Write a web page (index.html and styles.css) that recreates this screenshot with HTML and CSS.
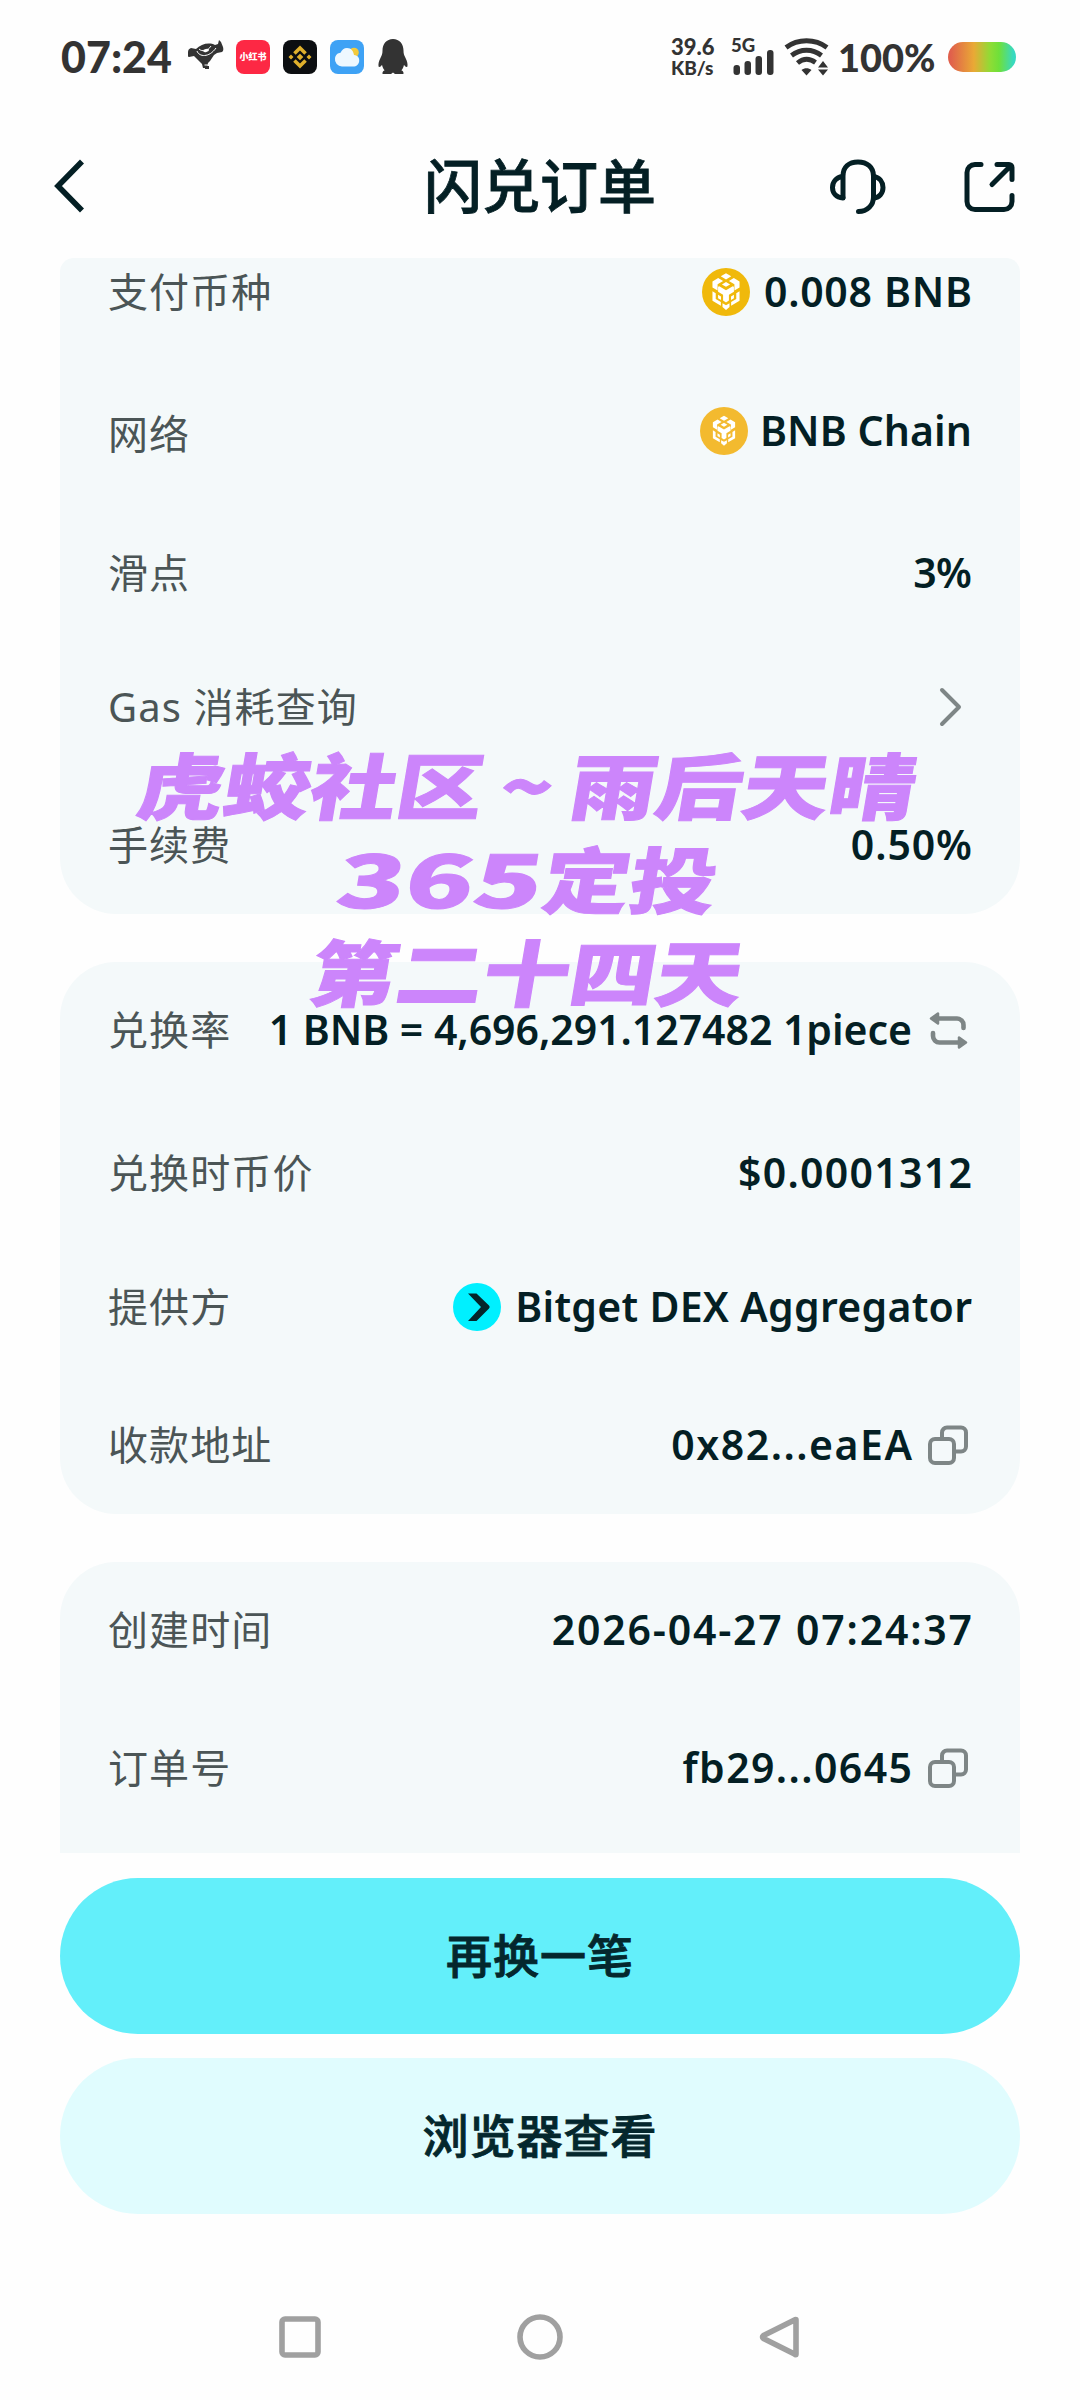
FILE: index.html
```
<!DOCTYPE html>
<html lang="zh-CN">
<head>
<meta charset="utf-8">
<title>闪兑订单</title>
<link rel="stylesheet" href="styles.css">
</head>
<body>
<svg width="0" height="0" class="defs" aria-hidden="true">
  <symbol id="copy" viewBox="0 0 40 40">
    <g fill="none" stroke="#7e8686" stroke-width="4">
      <path d="M14 13V7.500a5 5 0 0 1 5-5h14a5 5 0 0 1 5 5v14a5 5 0 0 1-5 5h-6"/>
      <rect x="2" y="14" width="24" height="24" rx="5"/>
    </g>
  </symbol>
  <symbol id="bnb" viewBox="0 0 48 48">
    <path fill="#fff" d="M24 8l4.500 2.600-4.500 2.600-4.500-2.600zM17.300 12l4.200 2.500-4.700 2.800v5.400l-1.800-1-2.600-1.500v-5.300zM30.700 12l4.900 2.900v5.300L31.200 22.700v-5.400l-4.700-2.800zM24 15.500l3.500 2-3.500 2.100-3.500-2.100zM18.200 19l5.800 3.400 5.800-3.400 1 .6v4.200l-4.300 2.500v5L24 32.900l-2.500-1.600v-5l-4.300-2.500v-4.200zM12.400 23.300l2.800 1.700v5l4.400 2.600v3.200l-7.200-4.200zM35.600 23.300v8.300l-7.200 4.200v-3.200l4.400-2.600v-5zM17.200 26.400l2.500 1.500v2.900l-2.500-1.500zM30.800 26.400v2.900l-2.500 1.500v-2.900zM21 33.600l3 1.700 3-1.700v3.200l-3 2.600-3-2.600z"/>
  </symbol>
</svg>

<header class="status">
  <span class="clock">07:24</span>
  <svg class="app-bird" width="36" height="36" viewBox="0 0 36 36"><path fill="#333" d="M0 13q0-3 3-4l5 1c5-5 13-7 19-4l3-1 1-4 2 2 2 5q1 4-1 5l-5 1-3 2-4 6-2 2-1 5h-4l-1-4-8-8-5 1-4-2z"/><path d="M9 12c2 6 12 7 19-3M11 10c3 3 9 2 12-3" fill="none" stroke="#fff" stroke-width="1"/><ellipse cx="18" cy="11.500" rx="3" ry="1.600" fill="#fff" transform="rotate(-12 18 11)"/><path d="M17 27h4v3h-4z" fill="#333"/><path d="M16.500 26h5" stroke="#fff"/></svg>
  <span class="app-red">小红书</span>
  <svg class="app" width="34" height="34" viewBox="0 0 34 34"><rect width="34" height="34" rx="8" fill="#0c0e11"/><g fill="#e0b02c"><path d="M17 5.500l6.800 6.800-2.500 2.500L17 10.500l-4.300 4.300-2.500-2.500zM17 28.500l-6.800-6.800 2.500-2.500 4.300 4.300 4.300-4.300 2.500 2.500zM8 14.500l2.500 2.500L8 19.500 5.500 17zM26 14.500l2.500 2.500-2.500 2.500-2.500-2.500zM17 13.700l3.300 3.300-3.300 3.300-3.300-3.300z"/></g></svg>
  <svg class="app" width="34" height="34" viewBox="0 0 34 34"><rect width="34" height="34" rx="8" fill="#3ea2f5"/><circle cx="24" cy="12.500" r="4.800" fill="#f3ca3c"/><path d="M12 26.500a7 7 0 0 1-7-8c.5-4 3-5.500 5.500-5.700C12 9.500 14 8 17 8c4.500 0 6.500 3.500 7 7 4 .5 5.500 3 5.200 6-.3 3.500-2.700 5.500-6 5.500z" fill="#eef8ff"/></svg>
  <svg class="app-qq" width="32" height="36" viewBox="0 0 32 36"><path fill="#333" d="M16 0c6.500 0 10.500 5 10.500 11.500 0 3 .5 4.500 1.800 7 2 4 2.700 7 2 9.200-.8.800-2.200-.3-3.300-2-.5 2.500-1.400 4.300-2.600 5.600 2 1 2.400 2.200 2 3.700H18l-2-1.500-2 1.500H5.600c-.4-1.500 0-2.700 2-3.700C6.400 30 5.500 28.200 5 25.700c-1.100 1.700-2.500 2.800-3.300 2-.7-2.200 0-5.200 2-9.200 1.300-2.500 1.800-4 1.800-7C5.500 5 9.500 0 16 0z"/></svg>
  <span class="speed"><b>39.6</b><i>KB/s</i></span>
  <svg class="signal" width="44" height="50" viewBox="0 -6 44 50"><text x="0" y="14" class="net">5G</text><g fill="#333"><rect x="2.500" y="27" width="6.500" height="10" rx="3"/><rect x="13.500" y="23" width="6.500" height="14" rx="3"/><rect x="24.500" y="18" width="6.500" height="19" rx="3"/><rect x="36" y="12" width="6.500" height="25" rx="3"/></g></svg>
  <svg class="wifi" width="46" height="38" viewBox="0 0 46 38"><g fill="none" stroke="#333" stroke-width="4.800"><path d="M2 9.500c12-9 29-9 41 0"/><path d="M7.500 17.500c9-7 21-7 30 0"/><path d="M13.500 25c5.500-4.500 12-4.800 18-.5"/></g><path fill="#333" d="M17.500 32c3-2.500 7-2.500 10 0l-5 5.500zM39 23l5 6.500H34zM39 37.500l-5-6h10z"/></svg>
  <span class="percent">100%</span>
  <span class="battery"></span>
</header>

<nav class="title-bar">
  <svg class="back" width="36" height="60" viewBox="0 0 36 60"><path d="M32 5.500L8 30l24 24.500" fill="none" stroke="#041f24" stroke-width="5.600"/></svg>
  <h1>闪兑订单</h1>
  <svg class="support" width="60" height="60" viewBox="0 0 60 60"><g fill="none" stroke="#041f24" stroke-width="5" stroke-linecap="round" stroke-linejoin="round"><path d="M16 41.500V20C16 11 22 6 31 6S46.500 11 46.500 20v21c0 8-6 14.500-15 14.500"/><path d="M15.500 20.500C9 21.500 5.500 26 5.500 31.500S9 41.500 16 42M47 20.500C52.500 21.500 56 26 56 31.500S52.500 41.500 47 42"/></g></svg>
  <svg class="share" width="60" height="60" viewBox="0 0 60 60"><g fill="none" stroke="#041f24" stroke-width="5" stroke-linecap="round" stroke-linejoin="round"><path d="M21 8.500h-6a8 8 0 0 0-8 8v29a8 8 0 0 0 8 8h29a8 8 0 0 0 8-8V39.500M37 8.500h12a3 3 0 0 1 3 3V23.500M50 10.500L32 28.500"/></g></svg>
</nav>

<main>
  <section class="card card-pay">
    <div class="row"><span class="label">支付币种</span><span class="coin"><svg width="56" height="56"><use href="#bnb"/></svg></span><span class="value amount">0.008 BNB</span></div>
    <div class="row"><span class="label low">网络</span><span class="coin chain"><svg width="46" height="46"><use href="#bnb"/></svg></span><span class="value network">BNB Chain</span></div>
    <div class="row"><span class="label">滑点</span><span class="value percent-value">3%</span></div>
    <div class="row"><span class="label">Gas 消耗查询</span><svg class="go" width="24" height="40" viewBox="0 0 24 40"><path d="M3 3l17 17L3 37" fill="none" stroke="#7e8686" stroke-width="4" stroke-linecap="round" stroke-linejoin="round"/></svg></div>
    <div class="row"><span class="label">手续费</span><span class="value fee">0.50%</span></div>
  </section>

  <section class="card card-rate">
    <div class="row"><span class="label">兑换率</span><span class="value rate">1 BNB = 4,696,291.127482 1piece</span><svg class="tool" width="40" height="40" viewBox="0 0 40 40"><g fill="none" stroke="#7e8686" stroke-width="4.600" stroke-linecap="round"><path d="M9 8.500h20a6.500 6.500 0 0 1 6.500 6.500v3M5 23v3a6.500 6.500 0 0 0 6.500 6.500H31"/></g><path fill="#7e8686" stroke="#7e8686" stroke-width="2.500" stroke-linejoin="round" d="M3 8.500L10 3.500v10zM38 32.500L31 27.500v10z"/></svg></div>
    <div class="row"><span class="label">兑换时币价</span><span class="value price">$0.0001312</span></div>
    <div class="row"><span class="label">提供方</span><svg class="provider-mark" width="48" height="48" viewBox="0 0 48 48"><circle cx="24" cy="24" r="24" fill="#00f0ff"/><path fill="#04252b" d="M15 10.500h8.500L36 22.500q1.500 1.500 0 3L23.500 38H15l13-14z"/></svg><span class="value provider">Bitget DEX Aggregator</span></div>
    <div class="row"><span class="label">收款地址</span><span class="value address">0x82...eaEA</span><svg class="tool" width="40" height="40"><use href="#copy"/></svg></div>
  </section>

  <section class="card card-order">
    <div class="row"><span class="label">创建时间</span><span class="value time">2026-04-27 07:24:37</span></div>
    <div class="row"><span class="label">订单号</span><span class="value order">fb29...0645</span><svg class="tool" width="40" height="40"><use href="#copy"/></svg></div>
  </section>
</main>

<div class="actions">
  <button class="primary">再换一笔</button>
  <button class="secondary">浏览器查看</button>
</div>

<footer class="system-nav">
  <svg width="48" height="48" viewBox="0 0 48 48"><rect x="6" y="6" width="36" height="36" rx="3" /></svg>
  <svg width="48" height="48" viewBox="0 0 48 48"><circle cx="24" cy="24" r="20"/></svg>
  <svg width="48" height="48" viewBox="0 0 48 48"><path d="M40 7v34q0 1.500-1.500 0L7.500 25.500q-2-1.500 0-3L38.500 7q1.500-1 1.500 0z"/></svg>
</footer>

<div class="caption">
  <p>虎蛟社区<span class="tilde">~</span>雨后天晴</p>
  <p><span class="digits">365</span>定投</p>
  <p>第二十四天</p>
</div>
</body>
</html>
```
FILE: styles.css
```
* { box-sizing: border-box; }
body {
  margin: 0;
  width: 1080px;
  height: 2400px;
  position: relative;
  overflow: hidden;
  background: #fefefe;
  display: flex;
  flex-direction: column;
  color: #041f24;
  font-family: "Noto Sans", "Noto Sans CJK SC", sans-serif;
}
svg { display: block; flex: none; }
.defs { position: absolute; }

.status {
  height: 114px;
  padding: 0 62px 0 61px;
  display: flex;
  align-items: center;
  color: #333;
  font-family: Lato, sans-serif;
}
.clock { width: 127px; font-size: 43px; font-weight: 900; line-height: 50px; }
.app-bird { margin-right: 12px; }
.app-red {
  width: 34px;
  height: 34px;
  margin-right: 13px;
  border-radius: 8px;
  background: #fd2844;
  color: #fff;
  font: 900 9px/34px "Noto Sans CJK SC", sans-serif;
  text-align: center;
}
.app { margin-right: 13px; }
.app-qq { margin-right: 262px; }
.speed {
  width: 48px;
  margin-right: 12px;
  display: flex;
  flex-direction: column;
  font-size: 22px;
  line-height: 21px;
}
.speed b { font-weight: 900; }
.speed i { font-style: normal; font-weight: 900; font-size: 19px; }
.net { font: 900 18.5px Lato, sans-serif; fill: #333; }
.signal { margin-right: 9px; }
.wifi { margin-right: 8px; }
.percent { width: 110px; font-size: 38px; font-weight: 900; line-height: 50px; }
.battery {
  width: 68px;
  height: 30px;
  border-radius: 15px;
  background: linear-gradient(90deg, #e0604c 4%, #e9a935 38%, #8fdc35 62%, #6fe03a 75%, #38d9c0 96%);
}

.title-bar {
  height: 144px;
  padding: 0 60px 0 50px;
  display: flex;
  align-items: center;
}
.title-bar h1 {
  margin: 0 auto 0 338px;
  font-size: 58px;
  line-height: 70px;
  font-weight: 500;
  -webkit-text-stroke: 0.8px currentColor;
}
.support { margin-right: 73px; }

main {
  height: 1595px;
  padding: 0 60px;
  overflow: hidden;
  display: flex;
  flex-direction: column;
  gap: 48px;
}
.card {
  flex: none;
  padding: 44px 48px 0;
  display: grid;
  background: #f4f9fa;
  border-radius: 56px;
}
.card-pay {
  height: 656px;
  padding-top: 10px;
  grid-template-rows: 139px 142px 134px 138px 48px;
  border-radius: 14px 14px 56px 56px;
}
.card-rate { height: 552px; grid-template-rows: 143px 134px 138px 48px; }
.card-order { height: 400px; grid-template-rows: 138px 48px; }

.row { height: 48px; display: flex; align-items: center; }
.label {
  margin-right: auto;
  color: #4b5556;
  font-size: 40px;
  line-height: 48px;
  letter-spacing: 1.1px;
}
.low { padding-top: 5px; }
.value {
  --ls: 0px;
  font-size: 41px;
  font-weight: 600;
  line-height: 46px;
  padding-bottom: 2px;
  letter-spacing: var(--ls);
  margin-right: calc(0px - var(--ls));
  white-space: nowrap;
}
.percent-value { --ls: -0.5px; }
.amount { --ls: 0.7px; }
.network { --ls: 0.1px; }
.fee { --ls: 0.9px; }
.rate { --ls: -0.04px; }
.price { --ls: 1.3px; }
.provider { --ls: 0.28px; }
.address { --ls: 1.5px; }
.time { --ls: 1.8px; }
.order { --ls: 1.4px; }

.coin {
  width: 48px;
  height: 48px;
  margin-right: 14px;
  border-radius: 50%;
  background: #f0b90b;
  display: flex;
  align-items: center;
  justify-content: center;
}
.chain { background: #f3ba2f; margin-right: 12px; }
.go { margin-right: 9px; }
.tool { margin: 0 4px 0 16px; }
.provider-mark { margin-right: 14px; }

.actions {
  padding: 25px 60px 0;
  display: flex;
  flex-direction: column;
  gap: 24px;
}
.actions button {
  height: 156px;
  padding: 0 0 6px;
  border: 0;
  border-radius: 78px;
  color: #04272d;
  font: 500 46px/60px "Noto Sans CJK SC", sans-serif;
  letter-spacing: 1px;
  -webkit-text-stroke: 0.9px currentColor;
}
.primary { background: #63effa; }
.secondary { background: #e0fcfe; }

.system-nav {
  margin-top: auto;
  height: 126px;
  padding: 0 276px;
  display: flex;
  justify-content: space-between;
}
.system-nav svg { margin-top: 39px; fill: none; stroke: #a0a0a0; stroke-width: 5.600; stroke-linejoin: round; }

.caption {
  position: absolute;
  left: 128px;
  top: 736px;
  width: 800px;
  color: #cc85fb;
  text-align: center;
  font: 900 72px/93.5px "Noto Sans CJK SC", sans-serif;
  -webkit-text-stroke: 1px currentColor;
}
.caption p { margin: 0; white-space: nowrap; transform: scaleX(1.2) skewX(-8deg); }
.digits { display: inline-block; width: 172px; text-align: left; transform: scaleX(1.3); transform-origin: left; }
.tilde { display: inline-block; width: 72px; }
```
